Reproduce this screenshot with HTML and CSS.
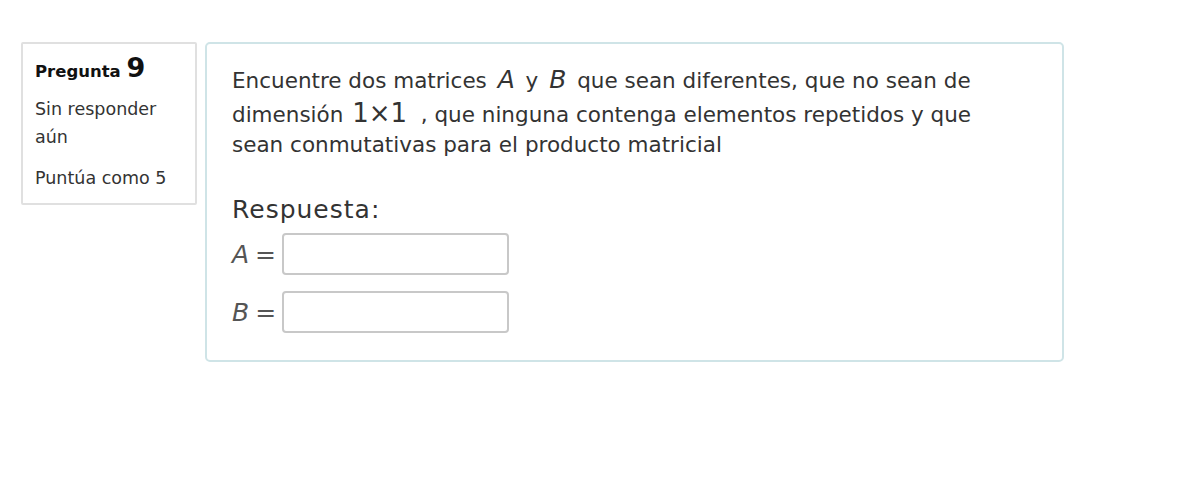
FILE: index.html
```html
<!DOCTYPE html>
<html lang="es">
<head>
    <meta charset="UTF-8">
    <title>Pregunta 9</title>
    <link rel="stylesheet" href="styles.css">
</head>
<body>

    <div class="que">
        <!-- Info -->
        <div class="info">
            <h3 class="no">Pregunta <span class="qno">9</span></h3>
            <div class="state">Sin responder aún</div>
            <div class="grade">Puntúa como 5</div>
        </div>

        <!-- Question -->
        <div class="content">
            <div class="qtext">
                Encuentre dos matrices <span class="mvar">A</span> y <span class="mvar">B</span> que sean diferentes, que no sean de<br>
                dimensión <span class="mnum">1×1</span>&nbsp;&nbsp;, que ninguna contenga elementos repetidos y que<br>
                sean conmutativas para el producto matricial
            </div>

            <div class="answer-label">Respuesta:</div>
            <div class="answer-row">
                <span class="mvar small">A</span><span class="eq">=</span>
                <input type="text" class="answer-input">
            </div>
            <div class="answer-row row-b">
                <span class="mvar small">B</span><span class="eq">=</span>
                <input type="text" class="answer-input">
            </div>
        </div>
    </div>

</body>
</html>
```

FILE: styles.css
```css
body, html {
    margin: 0;
    padding: 0;
    background-color: #ffffff;
    font-family: "DejaVu Sans", Verdana, sans-serif;
    color: #333;
}

/* Question layout */
.que {
    display: flex;
    align-items: flex-start;
    gap: 8px;
    padding: 42px 0 0 21px;
}

/* Info box */
.info {
    width: 160px;
    border: 2px solid #e0e0e0;
    border-radius: 2px;
    padding: 10px 0 11px 12px;
}

.no {
    margin: 0;
    font-size: 16.5px;
    line-height: 28px;
    font-weight: bold;
    color: #111;
}

.qno {
    font-size: 27px;
}

.state {
    margin-top: 9px;
    font-size: 17.5px;
    line-height: 28px;
    padding-right: 8px;
}

.grade {
    margin-top: 13px;
    font-size: 17.5px;
    line-height: 28px;
}

/* Content box */
.content {
    width: 805px;
    border: 2px solid #cfe4e7;
    border-radius: 5px;
    padding: 21px 25px 27px 25px;
}

.qtext {
    font-size: 21.5px;
    line-height: 30px;
    color: #333;
}

.mvar {
    font-style: italic;
    font-size: 25px;
    margin: 0 4px;
}

.mnum {
    display: inline-block;
    font-size: 26px;
    line-height: 34px;
    margin-left: 2px;
}

.answer-label {
    margin-top: 35px;
    font-size: 25px;
    letter-spacing: 1px;
    color: #333;
}

.answer-row {
    display: flex;
    align-items: center;
    margin-top: 9px;
}

.row-b {
    margin-top: 16px;
}

.answer-row .small {
    font-size: 25px;
    margin: 0;
    color: #555;
}

.eq {
    font-size: 25px;
    margin: 0 6px 0 6px;
    color: #555;
}

.answer-input {
    box-sizing: border-box;
    width: 227px;
    height: 42px;
    border: 2px solid #c8c8c8;
    border-radius: 4px;
    padding: 0;
    margin: 0;
    outline: none;
}
```
